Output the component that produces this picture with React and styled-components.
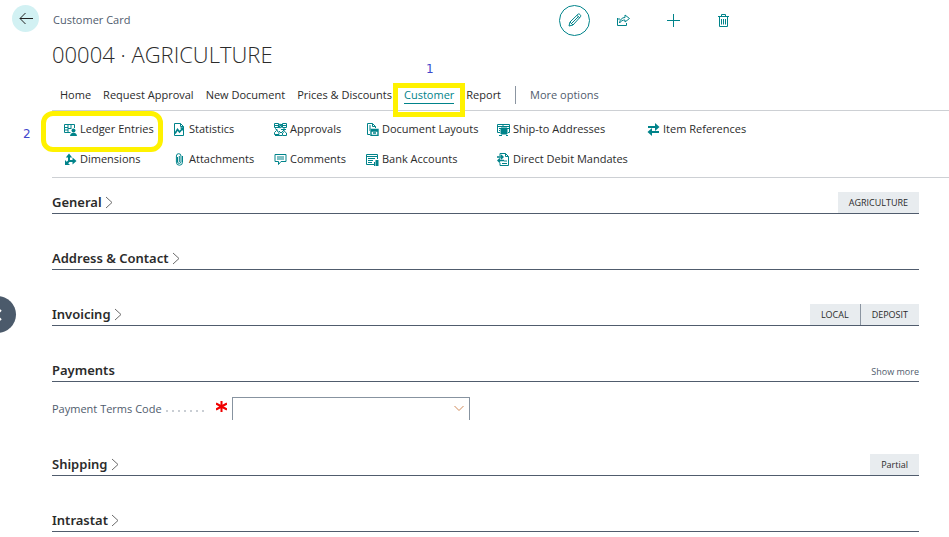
import React from 'react';
import styled, { createGlobalStyle } from 'styled-components';

const teal = '#00838a';
const slate = '#505c6d';

const GlobalStyle = createGlobalStyle`
  * { box-sizing: border-box; }
  body {
    margin: 0;
    background: #fff;
    color: #2b2b2b;
    font: 11px/16px "Open Sans", "Noto Sans", sans-serif;
    overflow: hidden;
  }
  button {
    font: inherit;
    color: inherit;
    background: none;
    border: 0;
    padding: 0;
    cursor: pointer;
  }
`;

const Page = styled.main`
  position: relative;
  padding-left: 52px;
`;

const TopBar = styled.header`
  display: grid;
  grid-template-columns: 507px 1fr;
  align-items: center;
  height: 40px;
`;

const Breadcrumb = styled.div`
  display: flex;
  align-items: center;
  gap: 14px;
  margin-left: -40px;
  color: ${slate};
`;

const BackButton = styled.button`
  display: grid;
  place-items: center;
  width: 27px;
  height: 27px;
  margin-bottom: 4px;
  border-radius: 50%;
  background: #d2f1f3;
  color: #212121;
`;

const Actions = styled.div`
  display: flex;
  align-items: center;
  gap: 34px;
  color: ${teal};
`;

const IconButton = styled.button`
  display: grid;
  place-items: center;
  width: 16px;
  height: 16px;
`;

const EditButton = styled(IconButton)`
  width: 31px;
  height: 31px;
  border: 1px solid ${teal};
  border-radius: 50%;
  margin-right: -9px;
`;

const Title = styled.h1`
  margin: 0;
  font-size: 22px;
  line-height: 28px;
  font-weight: 300;
`;

const Tabs = styled.nav`
  display: flex;
  align-items: center;
  gap: 12px;
  height: 31px;
  margin-top: 11px;
  padding-left: 8px;
`;

const Tab = styled.button`
  position: relative;
  height: 16px;
  white-space: nowrap;
  color: ${(p) => (p.$active ? teal : p.$muted ? slate : 'inherit')};
  box-shadow: ${(p) => (p.$active ? `0 1px 0 ${teal}` : 'none')};
`;

const Divider = styled.span`
  width: 1px;
  height: 18px;
  margin: 0 2px;
  background: #8b95a1;
`;

const Ribbon = styled.div`
  display: grid;
  grid-template-columns: 109px 101px 92px 131px 150px 1fr;
  grid-auto-rows: 30px;
  padding: 3px 0 3px 12px;
  border: solid #cdd0d4;
  border-width: 1px 0;
`;

const Command = styled.button`
  position: relative;
  display: flex;
  align-items: center;
  justify-self: start;
  gap: 3px;
  grid-column: ${(p) => p.$column};
  white-space: nowrap;

  > svg { color: ${teal}; flex: none; }
`;

const Highlight = styled.span`
  position: absolute;
  z-index: 1;
  inset: ${(p) => p.$inset};
  border: 5px solid #fff200;
  border-radius: ${(p) => p.$radius};
  pointer-events: none;
`;

const StepNumber = styled.span`
  position: absolute;
  left: ${(p) => p.$left};
  top: ${(p) => p.$top};
  color: #3f48cc;
  font: 12px/16px "DejaVu Sans", sans-serif;
`;

const Sections = styled.div`
  padding-right: 30px;
`;

const SectionHeader = styled.div`
  display: flex;
  justify-content: space-between;
  align-items: flex-end;
  height: ${(p) => (p.$first ? '36px' : '56px')};
  border-bottom: 1px solid ${slate};
`;

const SectionTitle = styled.h2`
  margin: 0;
  font-family: "Noto Sans", sans-serif;
  font-size: 13px;
  line-height: 22px;
  font-weight: 600;
`;

const SectionToggle = styled.button`
  display: flex;
  align-items: center;
  gap: 3px;

  svg { color: #6b6b6b; }
`;

const Chips = styled.div`
  display: flex;
`;

const Chip = styled.span`
  padding: 0 11px;
  background: #e8ecef;
  font-size: 9px;
  line-height: 21px;

  & + & { border-left: 1px solid #8b95a1; }
`;

const ShowMore = styled.button`
  color: ${slate};
  font-size: 9px;
  line-height: 18px;
`;

const Field = styled.div`
  display: grid;
  grid-template-columns: 114px 50px 16px 238px;
  height: 38px;
  padding-top: 15px;
  color: ${slate};
`;

const FieldLabel = styled.label`
  line-height: 24px;
  white-space: nowrap;
`;

const Leader = styled.span`
  height: 2px;
  margin: 13px 8px 0 0;
  background: repeating-linear-gradient(90deg, #c9ced4 0 2px, transparent 2px 6px);
`;

const Required = styled.span`
  display: grid;
  place-items: center start;
  height: 18px;
`;

const SelectFrame = styled.div`
  position: relative;
  height: 23px;

  svg { position: absolute; right: 6px; top: 8px; pointer-events: none; }
`;

const Select = styled.select`
  appearance: none;
  width: 100%;
  height: 23px;
  padding: 0 24px 0 8px;
  border: 1px solid #8793a0;
  border-bottom: 0;
  border-radius: 0;
  background: #fff;
  font: inherit;
  color: inherit;
`;

const PreviousButton = styled.button`
  position: absolute;
  left: -21px;
  top: 296px;
  display: grid;
  place-items: center;
  width: 37px;
  height: 37px;
  border-radius: 50%;
  background: #4b5a6b;
  color: #fff;
`;

function Glyph({ size = 13, width = size, children, stroke = 1, box = '0 0 13 13' }) {
  return (
    <svg width={width} height={size} viewBox={box} fill="none" stroke="currentColor" strokeWidth={stroke} aria-hidden="true">
      {children}
    </svg>
  );
}

const icons = {
  ledger: (
    <Glyph>
      <path d="M6.500 9.500H.5v-8h10V5M4 2v7M.5 4.500H4M.5 7H4M7 2v4M4 5.500h3" />
      <g fill="currentColor" stroke="none">
        <circle cx="9.500" cy="7.500" r="2" />
        <path d="M6 13c0-4.500 7-4.500 7 0z" />
      </g>
    </Glyph>
  ),
  statistics: (
    <Glyph>
      <path d="M1.500.5h6l3 3v9h-9zM7.500.5v3h3" />
      <path d="M2 10.500l2.500-4 2 2.500 3.500-4M7.500 5H10v2.500" strokeWidth="1.600" />
    </Glyph>
  ),
  approvals: (
    <Glyph>
      <path d="M.5.5h4v4h-4zM8.500.5h4v4h-4zM.5 11.500V9.500l2-2 2.500 2v2zM8.500 12.500V10l2-1.500 2 1.500v2.500zM4 1l4 3M8 1L4 5M1 5.500l3 2M7 6.500h5M10 4v4M5 8l2 2 3-3M1 12.500h7M9 2.500h3M1 2.500h3" />
      <circle cx="6" cy="3" r="1.800" />
    </Glyph>
  ),
  layouts: (
    <Glyph>
      <path d="M4 11.500H1.500V.5h5l3 3V5M6.500.5v3h3M3 3h2M3 5h2M3 7h1" />
      <path d="M5 6.500h7v6H5zM5 8h7M7 10h3" strokeWidth="1.400" />
    </Glyph>
  ),
  ship: (
    <Glyph>
      <path d="M3 9.500H.5v-8h12v8H11M0 3.500h13M2 5.500h2M2 7.500h1M10 5.500h2M6 1.500v2" />
      <path d="M4 5h6v6H4z" fill="currentColor" />
      <path d="M2 12.500h3M9 12.500h2" />
    </Glyph>
  ),
  references: (
    <Glyph stroke={2}>
      <path d="M1 4h8M4 9h8" />
      <path d="M8 0l4.500 4L8 8zM5 5L.5 9 5 13z" fill="currentColor" stroke="none" />
    </Glyph>
  ),
  dimensions: (
    <Glyph stroke={2}>
      <path d="M5 2v6h6M5 8l-3 3" />
      <path d="M1.800 4.500L5 .5l3.200 4zM8.500 4.500l4 3.500-4 3.500zM1 7v5h5z" fill="currentColor" stroke="none" />
    </Glyph>
  ),
  attachments: (
    <Glyph>
      <path d="M4.500 4v5a1.800 1.800 0 003.500 0V3a2.300 2.300 0 00-4.600 0v6.200a3 3 0 006.100 0V3M6.300 3v6" />
    </Glyph>
  ),
  comments: (
    <Glyph>
      <path d="M1 1.500h11v7H7l-2.500 3v-3H1zM3 4h7M3 6h7" />
    </Glyph>
  ),
  bank: (
    <Glyph>
      <path d="M8 11.500H.5v-10h11V6M.5 3.500h11M2 5.500h7M2 7.500h5M2 9.500h4" />
      <path d="M9.500 7h3v6h-3z" fill="currentColor" stroke="none" />
      <path d="M8.500 9v4" />
    </Glyph>
  ),
  debit: (
    <Glyph>
      <path d="M3 3V.5h5.500l3 3v9H3V10M8.500.5v3h3M5 10.500h5M7 8h3" />
      <path d="M0 4h5.500M4 2l2 2-2 2M7 7.500H1M3 5.500l-2 2 2 2" strokeWidth="1.400" />
    </Glyph>
  ),
};

const tabs = ['Home', 'Request Approval', 'New Document', 'Prices & Discounts', 'Customer', 'Report'];

const commands = [
  ['ledger', 'Ledger Entries', 1],
  ['statistics', 'Statistics', 2],
  ['approvals', 'Approvals', 3],
  ['layouts', 'Document Layouts', 4],
  ['ship', 'Ship-to Addresses', 5],
  ['references', 'Item References', 6],
  ['dimensions', 'Dimensions', 1],
  ['attachments', 'Attachments', 2],
  ['comments', 'Comments', 3],
  ['bank', 'Bank Accounts', 4],
  ['debit', 'Direct Debit Mandates', 5],
];

function Section({ title, chips = [], first, open }) {
  return (
    <SectionHeader $first={first}>
      <SectionTitle>
        <SectionToggle aria-expanded={Boolean(open)}>
          {title}
          {!open && (
            <Glyph size={13} width={8} box="0 0 8 13">
              <path d="M1 1l6 5.500-6 5.500" />
            </Glyph>
          )}
        </SectionToggle>
      </SectionTitle>
      {open ? (
        <ShowMore>Show more</ShowMore>
      ) : (
        <Chips>{chips.map((chip) => <Chip key={chip}>{chip}</Chip>)}</Chips>
      )}
    </SectionHeader>
  );
}

export default function App() {
  return (
    <Page>
      <GlobalStyle />
      <TopBar>
        <Breadcrumb>
          <BackButton aria-label="Back">
            <Glyph size={13} width={14} box="0 0 14 13">
              <path d="M14 6.500H1M6.500 1L1 6.500 6.500 12" />
            </Glyph>
          </BackButton>
          Customer Card
        </Breadcrumb>
        <Actions>
          <EditButton aria-label="Edit">
            <Glyph size={14} box="0 0 14 14">
              <path d="M1 13l1-4L10 1.200c1-1 3.500 1 2.500 2.500L5 12zM2 9l3 3M9 2.500L12 5M4 10l6.500-6.500" />
            </Glyph>
          </EditButton>
          <IconButton aria-label="Share">
            <Glyph size={13} width={14} box="0 0 14 13">
              <path d="M1.500 4v7.500h9V9M1.500 5H4M3.500 9C4 5.500 6 3.500 9 3.500V1l4.500 3.500L9 8V6C6.500 6 5 7 3.500 9z" />
            </Glyph>
          </IconButton>
          <IconButton aria-label="New">
            <Glyph size={13}>
              <path d="M0 6.500h13M6.500 0v13" />
            </Glyph>
          </IconButton>
          <IconButton aria-label="Delete">
            <Glyph size={13} width={11} box="0 0 11 13">
              <path d="M0 2.500h11M3.500 2V.5h4V2M1.500 3v9.500h8V3M3.500 5v5.500M5.500 5v5.500M7.500 5v5.500" />
            </Glyph>
          </IconButton>
        </Actions>
      </TopBar>

      <Title>00004 · AGRICULTURE</Title>

      <Tabs aria-label="Card actions">
        {tabs.map((name) => (
          <Tab key={name} $active={name === 'Customer'}>
            {name}
            {name === 'Customer' && <Highlight $inset="-4px -11px -14px" $radius="0" />}
          </Tab>
        ))}
        <Divider />
        <Tab $muted>More options</Tab>
      </Tabs>

      <Ribbon>
        {commands.map(([icon, name, column]) => (
          <Command key={name} $column={column}>
            {icons[icon]}
            {name}
            {icon === 'ledger' && <Highlight $inset="-3px -9px -8px -23px" $radius="12px" />}
          </Command>
        ))}
      </Ribbon>

      <Sections>
        <Section title="General" chips={['AGRICULTURE']} first />
        <Section title="Address & Contact" />
        <Section title="Invoicing" chips={['LOCAL', 'DEPOSIT']} />
        <Section title="Payments" open />
        <Field>
          <FieldLabel htmlFor="payment-terms">Payment Terms Code</FieldLabel>
          <Leader />
          <Required aria-hidden="true">
            <Glyph size={11} stroke={2} box="0 0 11 11">
              <path d="M5.500 0v11M0 2.500l11 6M11 2.500l-11 6" stroke="#f00000" />
            </Glyph>
          </Required>
          <SelectFrame>
            <Select id="payment-terms" required defaultValue="">
              <option value="" />
            </Select>
            <Glyph size={7} width={10} box="0 0 10 7">
              <path d="M.5 1L5 5.500 9.500 1" stroke="#d08a5b" />
            </Glyph>
          </SelectFrame>
        </Field>
        <Section title="Shipping" chips={['Partial']} />
        <Section title="Intrastat" />
      </Sections>

      <PreviousButton aria-label="Previous record">
        <Glyph size={12} width={8} box="0 0 8 12" stroke={2}>
          <path d="M7 1L2 6l5 5" />
        </Glyph>
      </PreviousButton>
      <StepNumber $left="426px" $top="61px">1</StepNumber>
      <StepNumber $left="23px" $top="126px">2</StepNumber>
    </Page>
  );
}
